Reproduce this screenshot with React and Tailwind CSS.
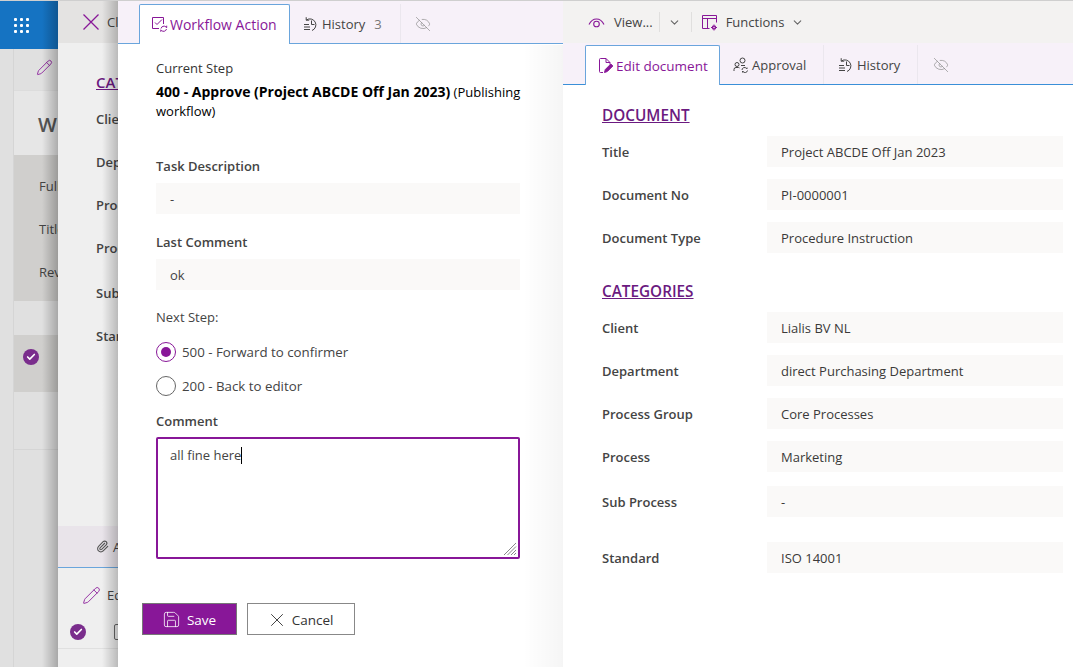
import { X, Pencil, EyeOff, ChevronDown, Paperclip, Save, Check } from "lucide-react";

const purple = "#881798";

const GridDots = () => (
  <svg width="15" height="15" viewBox="0 0 15 15" fill="#fff">
    {[0, 6, 12].map((y) =>
      [0, 6, 12].map((x) => <rect key={x + "-" + y} x={x} y={y} width="3" height="3" rx="1" />)
    )}
  </svg>
);

const EyeIcon = () => (
  <svg width="17" height="17" viewBox="0 0 17 17" fill="none" stroke={purple} strokeWidth="1.1">
    <path d="M1 10.500C3 6.500 5.500 5 8.500 5s5.500 1.500 7.500 5.500" />
    <circle cx="8.500" cy="10" r="2.800" />
  </svg>
);

const BigX = () => (
  <svg width="18" height="18" viewBox="0 0 18 18" fill="none" stroke={purple} strokeWidth="1.3" className="shrink-0">
    <path d="M1.500 1.500l15 15M16.500 1.500l-15 15" />
  </svg>
);

const HistoryIcon = () => (
  <svg width="16" height="16" viewBox="0 0 16 16" fill="none" stroke="#444" strokeWidth="1">
    <path d="M3.200 1.200v3h3" />
    <path d="M3.400 4A6 6 0 1 1 9 14.500" />
    <path d="M8.500 4.500v4h3" />
    <path d="M1 8.500h5M1 11h6M1 13.500h6" />
  </svg>
);

const WorkflowIcon = () => (
  <svg width="17" height="17" viewBox="0 0 17 17" fill="none" stroke={purple} strokeWidth="1">
    <path d="M8 12.500H1.500v-11h11V8" />
    <path d="M4 6.500l2 2 5-5" />
    <path d="M10 12.500a3 3 0 0 1 5-1.500l.7.7v-2M15.500 13a3 3 0 0 1-5 1.500l-.7-.7v2" />
  </svg>
);

const EditDocIcon = () => (
  <svg width="16" height="17" viewBox="0 0 16 17" fill="none" stroke={purple} strokeWidth="1">
    <path d="M5 15.500H2.500a1 1 0 0 1-1-1v-12a1 1 0 0 1 1-1H8l4 4v2" />
    <path d="M8 1.500v4h4" />
    <path d="M6.500 15.500l.8-3 5.500-5.500 2 2-5.500 5.500z" fill={purple} />
  </svg>
);

const ApprovalIcon = () => (
  <svg width="16" height="16" viewBox="0 0 16 16" fill="none" stroke="#444" strokeWidth="1">
    <circle cx="9.500" cy="3.500" r="2.500" />
    <circle cx="4" cy="7.500" r="2" />
    <path d="M1 14v-1.500a2 2 0 0 1 2-2h2.500a2 2 0 0 1 1 .4" />
    <path d="M8 8.500h4" />
    <path d="M9 13a2.500 2.500 0 0 1 4.500-1.500l.5.5v-1.500M14.500 13.500a2.500 2.500 0 0 1-4.500 1l-.5-.5v1.500" />
  </svg>
);

const FunctionsIcon = () => (
  <svg width="17" height="17" viewBox="0 0 17 17" fill="none" stroke={purple} strokeWidth="1">
    <path d="M8.500 14.500h-7v-13h14v7" />
    <path d="M1.500 4.500h14M6.500 4.500v10" />
    <circle cx="13" cy="13.500" r="1.500" strokeWidth="1.500" />
    <path d="M13 10.500v1M13 15.500v1M10 13.500h1M15 13.500h1" />
  </svg>
);

const Tab = ({ icon, label, active, count, className, labelClass }) => (
  <div
    className={
      active
        ? "flex items-center gap-[2px] bg-white border border-[#6aa5dc] border-b-0 rounded-t-[2px] -mb-px relative " + className
        : "flex items-center gap-[3px] border-r border-[#ebe7ee] " + className
    }
  >
    {icon}
    <span className={(active ? "text-[#881798] " : "text-[#444] ") + labelClass}>{label}</span>
    {count && <span className="text-[#777] ml-[6px]">{count}</span>}
  </div>
);

const Field = ({ label, value, className }) => (
  <div className={"flex items-center " + className}>
    <div className="w-[165px] font-semibold text-[#444]">{label}</div>
    <div className="w-[296px] h-[31px] bg-[#faf9f8] flex items-center pl-[14px] text-[#3b3a39]">{value}</div>
  </div>
);

const Heading = ({ children, className }) => (
  <div className={"text-[15.300px] font-semibold text-[#6b1a80] underline leading-[20px] " + className}>{children}</div>
);

const Radio = ({ checked, label }) => (
  <div className="flex items-center gap-[6px] h-[20px]">
    <div
      className={
        checked
          ? "w-[20px] h-[20px] rounded-full border border-[#881798] flex items-center justify-center"
          : "w-[20px] h-[20px] rounded-full border border-[#666]"
      }
    >
      {checked && <div className="w-[10px] h-[10px] rounded-full bg-[#881798]" />}
    </div>
    <span className="text-[#444] text-[13.300px]">{label}</span>
  </div>
);

const CheckBadge = () => (
  <div className="w-[16px] h-[16px] shrink-0 rounded-full bg-[#7a2d8c] flex items-center justify-center">
    <Check size={10} strokeWidth={4} color="#fff" />
  </div>
);

export default function App() {
  return (
    <div
      className="flex h-[667px] w-[1073px] overflow-hidden text-[13px] leading-[18px] bg-white"
      style={{ fontFamily: '"Open Sans", "Liberation Sans", sans-serif' }}
    >
      {/* page behind everything */}
      <div className="relative w-[58px] shrink-0 overflow-hidden bg-[#e0e0e0] border-t border-[#cfcfcf]">
        <div className="h-[48px] bg-[#1573c2] flex items-center pl-[14px]">
          <GridDots />
        </div>
        <div className="flex h-[618px]">
          <div className="w-[14px] shrink-0 border-r border-[#d5d5d5]" />
          <div className="flex-1 whitespace-nowrap">
            <div className="h-[42px] flex items-center pl-[22px] pb-[5px] border-b border-[#dcdcdc]">
              <Pencil size={17} strokeWidth={1.2} color={purple} />
            </div>
            <div className="h-[64px] bg-[#e6e6e6] pl-[24px] pt-[21px] text-[20px] leading-[26px] font-semibold text-[#555]">W</div>
            <div className="h-[146px] bg-[#d0cfcd] pl-[25px] pt-[22px] text-[#444] flex flex-col gap-[25px]">
              <div>Full name</div>
              <div>Title</div>
              <div>Review</div>
            </div>
            <div className="h-[34px]" />
            <div className="h-[57px] bg-[#d0cfcd] pl-[9px] pt-[14px]">
              <CheckBadge />
            </div>
            <div className="h-[58px] border-b border-[#d5d5d5]" />
          </div>
        </div>
        <div className="absolute inset-y-0 right-0 w-[16px] bg-gradient-to-r from-transparent to-[#00000040]" />
      </div>

      {/* first slide panel, mostly covered */}
      <div className="relative w-[60px] shrink-0 overflow-hidden bg-[#efefef] border-t border-[#cfcfcf] whitespace-nowrap">
        <div className="h-[42px] bg-[#e4e3e2] flex items-center pl-[24px] gap-[7px] text-[#444]">
          <BigX />
          <span>Close</span>
        </div>
        <div className="pl-[38px] h-[483px] text-[#444]">
          <div className="text-[15px] font-semibold text-[#6b1a80] underline leading-[20px] pt-[29px] h-[49px]">CATEGORIES</div>
          <div className="mt-[18px] font-semibold flex flex-col">
            <div className="h-[43px]">Client</div>
            <div className="h-[43px]">Department</div>
            <div className="h-[43px]">Process Group</div>
            <div className="h-[45px]">Process</div>
            <div className="h-[43px]">Sub Process</div>
            <div>Standard</div>
          </div>
        </div>
        <div className="h-[42px] bg-[#e9e4ea] border-b border-[#6aa5dc] flex items-center pl-[38px] gap-[4px] text-[#444]">
          <Paperclip size={13} color="#555" className="shrink-0" />
          <span>Attachments</span>
        </div>
        <div className="h-[54px] flex items-center pl-[24px] gap-[6px] text-[#444]">
          <Pencil size={19} strokeWidth={1.1} color={purple} className="shrink-0" />
          <span>Edit</span>
        </div>
        <div className="h-[27px] flex items-start pt-[2px] pl-[12px] gap-[28px] border-b border-[#e0e0e0]">
          <CheckBadge />
          <div className="w-[16px] h-[16px] border border-[#666] rounded-[2px] shrink-0" />
        </div>
        <div className="absolute inset-y-0 right-0 w-[16px] bg-gradient-to-r from-transparent to-[#00000038]" />
      </div>

      {/* workflow action panel */}
      <div className="relative w-[445px] shrink-0 flex flex-col bg-white border-t border-[#cfcfcf]">
        <div className="h-[43px] shrink-0 bg-[#f7f1f9] border-b border-[#6aa5dc] flex items-end">
          <Tab active icon={<WorkflowIcon />} label="Workflow Action" labelClass="text-[14px]" className="ml-[21px] h-[40px] w-[151px] pl-[11px]" />
          <Tab icon={<HistoryIcon />} label="History" count="3" className="h-[39px] w-[111px] pl-[13px]" />
          <div className="h-[39px] pl-[14px] flex items-center">
            <EyeOff size={16} strokeWidth={1} color="#888" />
          </div>
        </div>
        <div className="flex-1 pl-[38px] w-[402px] text-[#333]">
          <div className="mt-[15px]">Current Step</div>
          <div className="mt-[5px] text-black leading-[19px] whitespace-nowrap">
            <span className="font-bold text-[14px]">400 - Approve (Project ABCDE Off Jan 2023)</span> (Publishing
            <br />
            workflow)
          </div>
          <div className="mt-[36px] font-semibold text-[#444]">Task Description</div>
          <div className="mt-[8px] h-[31px] bg-[#faf9f8] flex items-center pl-[14px] text-[#444]">-</div>
          <div className="mt-[19px] font-semibold text-[#444]">Last Comment</div>
          <div className="mt-[8px] h-[31px] bg-[#faf9f8] flex items-center pl-[14px] text-[#444]">ok</div>
          <div className="mt-[18px] text-[#444]">Next Step:</div>
          <div className="mt-[16px] flex flex-col gap-[14px]">
            <Radio checked label="500 - Forward to confirmer" />
            <Radio label="200 - Back to editor" />
          </div>
          <div className="mt-[16px] font-semibold text-[#444]">Comment</div>
          <div className="relative mt-[7px] h-[122px] border-2 border-[#881798] rounded-[2px] pl-[12px] pt-[7px] text-[#444]">
            all fine here<span className="inline-block w-px h-[17px] bg-black align-[-4px]" />
            <svg className="absolute right-[1px] bottom-[1px]" width="14" height="14" viewBox="0 0 14 14" stroke="#888" strokeWidth="1">
              <path d="M1 13L13 1M4.500 13L13 4.500M8 13l5-5M11 13l2-2" />
            </svg>
          </div>
          <div className="mt-[44px] -ml-[14px] flex gap-[10px]">
            <div className="w-[95px] h-[32px] bg-[#881798] border border-[#777] flex items-center justify-center gap-[6px] pr-[1px] pt-[1px] text-white font-medium text-[13.500px]">
              <Save size={19} strokeWidth={1} color="#fff" />
              Save
            </div>
            <div className="w-[108px] h-[32px] bg-white border border-[#888] flex items-center justify-center gap-[4px] pr-[3px] pt-[1px] text-[#333] font-medium text-[13.500px]">
              <X size={22} strokeWidth={1} color="#333" />
              Cancel
            </div>
          </div>
        </div>
        <div className="absolute right-0 top-[44px] bottom-0 w-[40px] bg-gradient-to-r from-transparent to-[#0000000a]" />
      </div>

      {/* document panel */}
      <div className="flex-1 flex flex-col bg-white border-t border-[#cfcfcf]">
        <div className="h-[42px] shrink-0 bg-[#f3f2f1] flex items-center pl-[25px] text-[#444]">
          <EyeIcon />
          <span className="ml-[9px]">View...</span>
          <div className="ml-[6px] h-[20px] border-l border-[#e0dfde]" />
          <ChevronDown size={13} color="#666" className="ml-[8px] mr-[10px]" />
          <div className="h-[20px] border-l border-[#e0dfde]" />
          <div className="ml-[9px]"><FunctionsIcon /></div>
          <span className="ml-[8px]">Functions</span>
          <ChevronDown size={13} color="#666" className="ml-[7px]" />
        </div>
        <div className="h-[42px] shrink-0 bg-[#f7f1f9] border-b border-[#3a8fd8] flex items-end">
          <Tab active icon={<EditDocIcon />} label="Edit document" labelClass="text-[13.500px]" className="ml-[22px] h-[40px] w-[135px] pl-[12px]" />
          <Tab icon={<ApprovalIcon />} label="Approval" className="h-[39px] w-[104px] pl-[13px]" />
          <Tab icon={<HistoryIcon />} label="History" className="h-[39px] w-[94px] pl-[14px]" />
          <div className="h-[39px] pl-[15px] flex items-center">
            <EyeOff size={16} strokeWidth={1} color="#888" />
          </div>
        </div>
        <div className="pl-[39px]">
          <Heading className="mt-[20px]">DOCUMENT</Heading>
          <Field className="mt-[11px]" label="Title" value="Project ABCDE Off Jan 2023" />
          <Field className="mt-[12px]" label="Document No" value="PI-0000001" />
          <Field className="mt-[12px]" label="Document Type" value="Procedure Instruction" />
          <Heading className="mt-[28px]">CATEGORIES</Heading>
          <Field className="mt-[11px]" label="Client" value="Lialis BV NL" />
          <Field className="mt-[12px]" label="Department" value="direct Purchasing Department" />
          <Field className="mt-[12px]" label="Process Group" value="Core Processes" />
          <Field className="mt-[12px]" label="Process" value="Marketing" />
          <Field className="mt-[14px]" label="Sub Process" value="-" />
          <Field className="mt-[25px]" label="Standard" value="ISO 14001" />
        </div>
      </div>
    </div>
  );
}
